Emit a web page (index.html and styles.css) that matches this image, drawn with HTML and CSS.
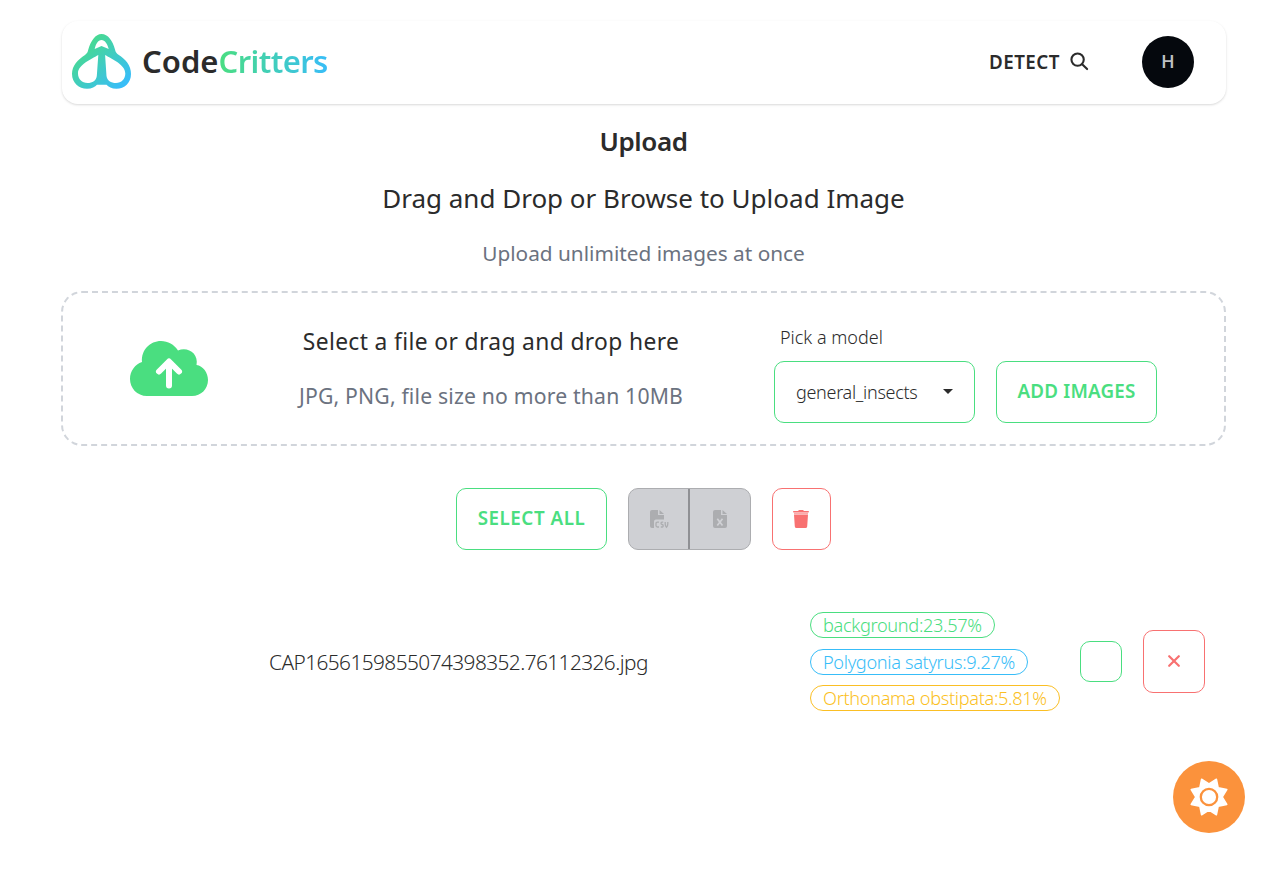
FILE: index.html
```html
<!DOCTYPE html>
<html lang="en">
<head>
<meta charset="utf-8">
<title>CodeCritters</title>
<link rel="stylesheet" href="styles.css">
</head>
<body>
<div class="page">
  <header class="navbar">
    <a class="brand">
      <svg class="brand-mark" viewBox="72 33 60 57">
        <defs><linearGradient id="g" x1="0" y1="0" x2="1" y2="1"><stop offset=".1" stop-color="#4ade80"/><stop offset=".9" stop-color="#38bdf8"/></linearGradient></defs>
        <path fill="url(#g)" fill-rule="evenodd" d="M101.500 34C108 34 112.500 40.500 115 49.500C115.500 52 116.500 53.500 118.500 54.700C125.500 59 131 65.500 131 74C131 83 124.500 88.700 116.500 88.700C111.500 88.700 108.500 87 106.500 84.700H97C95 87 92 88.700 87 88.700C79 88.700 72 83 72 74C72 65.500 78 59.500 85 55C87 53.500 87.800 52 88.300 49.500C91 40.500 95.500 34 101.500 34ZM101.500 40C98 40 95.800 44 94.700 49L101.500 46L108.700 49C107.500 44 105 40 101.500 40ZM98.300 55C91 59.500 78 64.500 78 73.500C78 79 82 83 87.500 83C92.500 83 96.300 80.500 96.800 76ZM105.100 55L106.500 76C107 80.500 111 83 116 83C121.500 83 125.300 79 125.300 73.500C125.300 64.500 112.500 59.500 105.100 55Z"/>
      </svg>
      <span class="brand-name">Code<span class="brand-accent">Critters</span></span>
    </a>
    <nav class="nav-actions">
      <a class="detect"><span>DETECT</span>
        <svg class="search" viewBox="0 0 20 20"><circle cx="8" cy="8" r="6.500"/><path d="M12.800 12.800L18 18"/></svg>
      </a>
      <div class="avatar">H</div>
    </nav>
  </header>
  <main class="main">
    <h1 class="title">Upload</h1>
    <p class="lead">Drag and Drop or Browse to Upload Image</p>
    <p class="sub">Upload unlimited images at once</p>
    <section class="dropzone">
      <svg class="cloud" viewBox="0 0 78 55"><path fill="#4ade80" d="M17 55C7 55 0 47 0 38C0 30 5 23.500 12 21C11 9 20 0 31 0C38 0 44 3.500 48 9.500C57 5 69 12 66.500 24C73 25 78 31.500 78 39C78 48 71 55 62 55Z"/><path class="cloud-arrow" d="M39 44.500V21M29 30.500L39 20.500L49 30.500"/></svg>
      <div class="drop-text">
        <p class="drop-title">Select a file or drag and drop here</p>
        <p class="drop-hint">JPG, PNG, file size no more than 10MB</p>
      </div>
      <div class="controls">
        <div class="model">
          <label class="model-label">Pick a model</label>
          <div class="select"><span>general_insects</span><svg class="caret" viewBox="0 0 10 5"><path fill="#2b2b2b" d="M0 0H10L5 5Z"/></svg></div>
        </div>
        <button class="btn add">ADD IMAGES</button>
      </div>
    </section>
    <div class="toolbar">
      <button class="btn all">SELECT ALL</button>
      <div class="exports">
        <button class="export export-csv"><svg class="csv" viewBox="0 0 19 19"><path fill="#acadb0" d="M2 0H8V5H14V9.500H6C4.500 9.500 4 10.500 4 12V18H2Q0 18 0 16V2Q0 0 2 0ZM9.500 0L14 4H9.500Z"/><path class="csv-letters" d="M9 12.200H7.500Q6 12.200 6 13.700V15.500Q6 17 7.500 17H9M13.200 12.200H12Q11 12.200 11 13.200T12.200 14.500T13.200 16T12.200 17H10.800M15.200 12V14Q15.200 16 16.500 17.300Q17.800 16 17.800 14V12"/></svg></button>
        <button class="export export-xls"><svg class="xls" viewBox="0 0 14 18"><path fill="#acadb0" d="M2 0H8V5H14V16Q14 18 12 18H2Q0 18 0 16V2Q0 0 2 0ZM9.500 0L14 4H9.500Z"/><path class="xls-x" d="M4.300 8.700L9.500 15.500M9.500 8.700L4.300 15.500"/></svg></button>
      </div>
      <button class="trash"><svg class="trash-icon" viewBox="0 0 16 18"><path fill="#f87171" d="M.8 1H5L6 0H10L11 1H15.200Q16 1 16 1.800T15.200 2.600H.8Q0 2.600 0 1.800T.8 1ZM1 4.800H15L14.200 16.500Q14 18 12.500 18H3.500Q2 18 1.800 16.500Z"/><path fill="#fbaaaa" d="M1 2.600H15V4.800H1Z"/></svg></button>
    </div>
    <section class="result">
      <div class="filename">CAP1656159855074398352.76112326.jpg</div>
      <div class="badges">
        <div class="badge green">background:23.57%</div>
        <div class="badge blue">Polygonia satyrus:9.27%</div>
        <div class="badge amber">Orthonama obstipata:5.81%</div>
      </div>
      <div class="check"></div>
      <button class="remove"><svg class="x" viewBox="0 0 12 12"><path d="M1.200 1.200L10.800 10.800M10.800 1.200L1.200 10.800"/></svg></button>
    </section>
  </main>
  <button class="fab"><svg class="sun" viewBox="-19 -19 38 38"><path class="rays" d="M7.400 -17.800L9.200 -9.200L17.800 -7.400L13.200 0L17.800 7.400L9.200 9.200L7.400 17.800L0 13.200L-7.400 17.800L-9.200 9.200L-17.800 7.400L-13.200 0L-17.800 -7.400L-9.200 -9.200L-7.400 -17.800L0 -13.200Z"/><circle r="8.200"/></svg></button>
</div>
</body>
</html>
```
FILE: styles.css
```css
* { box-sizing: border-box; }
body { margin: 0; background: #fff; color: #2b2b2b; font-family: "Noto Sans", sans-serif; }
p, h1 { margin: 0; }
button { background: none; font: inherit; padding: 0; display: flex; align-items: center; justify-content: center; }
svg { display: block; flex: none; }
.page { position: relative; height: 875px; padding: 21px 61px 0; overflow: hidden; }
.navbar { height: 83px; margin: 0 0 0 1px; border-radius: 16px; box-shadow: 0 1px 3px rgba(0,0,0,.1), 0 1px 2px rgba(0,0,0,.06); display: flex; align-items: center; justify-content: space-between; padding: 0 32px 2px 10px; }
.brand { display: flex; align-items: center; gap: 10px; }
.brand-mark { width: 60px; height: 57px; }
.brand-name { font-size: 31px; font-weight: 600; line-height: 38px; padding-bottom: 2px; white-space: nowrap; }
.brand-accent { letter-spacing: -.6px; background: linear-gradient(90deg, #4ade80, #38bdf8); -webkit-background-clip: text; color: transparent; }
.nav-actions { display: flex; align-items: center; gap: 53px; }
.detect { display: flex; align-items: center; gap: 10px; font-size: 18.800px; font-weight: 600; letter-spacing: .5px; }
.search { width: 19px; height: 19px; fill: none; stroke: #2b2b2b; stroke-width: 2.200; stroke-linecap: round; }
.avatar { width: 52px; height: 52px; border-radius: 50%; background: #05080d; color: #bfc0c2; font: 500 18px/52px Roboto, sans-serif; text-align: center; }
.title { margin-top: 17px; font-size: 26px; line-height: 40px; font-weight: 600; letter-spacing: -.4px; text-align: center; }
.lead { margin-top: 17px; font-size: 26px; line-height: 40px; text-align: center; }
.sub { margin-top: 19px; font-size: 20.800px; line-height: 32px; text-align: center; color: #6b7280; }
.dropzone { margin-top: 22px; height: 155px; border: 2px dashed #d1d5db; border-radius: 21px; display: grid; grid-template-columns: 212px 432px 1fr; align-items: center; }
.cloud { width: 78px; height: 55px; justify-self: center; margin-bottom: 1px; }
.cloud-arrow { fill: none; stroke: #fff; stroke-width: 6; stroke-linecap: round; stroke-linejoin: round; }
.drop-text { text-align: center; }
.drop-title { font-size: 22.800px; line-height: 32px; letter-spacing: .37px; }
.drop-hint { margin-top: 22px; font-size: 21.200px; line-height: 32px; color: #6b7280; letter-spacing: .17px; }
.controls { display: flex; align-items: flex-end; gap: 21px; padding: 8px 0 0 67px; }
.model-label { display: block; padding-left: 6px; font-size: 18px; line-height: 28px; margin-bottom: 10px; font-weight: 300; }
.select { width: 201px; height: 62px; border: 1px solid #4ade80; border-radius: 10px; display: flex; align-items: center; justify-content: space-between; padding: 0 21px; font-size: 18px; font-weight: 300; letter-spacing: -.3px; }
.caret { width: 10px; height: 5px; }
.btn { height: 62px; border: 1px solid #4ade80; border-radius: 10px; color: #4ade80; font-size: 18.800px; font-weight: 600; white-space: nowrap; padding-bottom: 1px; }
.add { width: 161px; letter-spacing: .2px; }
.toolbar { margin-top: 42px; display: flex; justify-content: center; gap: 21px; }
.all { width: 151px; letter-spacing: .55px; padding-bottom: 2px; }
.exports { display: flex; width: 123px; height: 62px; border: 1px solid #acadb0; border-radius: 10px; background: #cfd0d4; }
.export { border: 0; }
.export-csv { width: 59px; padding-left: 1px; }
.export-xls { width: 62px; border-left: 2px solid #8f9094; padding-right: 1px; }
.csv { width: 19px; height: 19px; }
.xls { width: 14px; height: 18px; }
.csv-letters { fill: none; stroke: #acadb0; stroke-width: 1.3; }
.xls-x { stroke: #d0d1d5; stroke-width: 1.7; }
.trash { width: 59px; height: 62px; border: 1px solid #f87171; border-radius: 10px; padding-right: 1px; }
.trash-icon { width: 16px; height: 18px; }
.result { margin-top: 62px; display: flex; align-items: center; justify-content: flex-end; padding-right: 21px; }
.filename { width: 541px; margin-right: auto; padding-left: 208px; font-size: 20.800px; white-space: nowrap; font-weight: 300; letter-spacing: -.56px; }
.badges { display: flex; flex-direction: column; align-items: flex-start; gap: 10.500px; width: 250px; margin-right: 20px; }
.badge { height: 26px; line-height: 25px; border: 1px solid; border-radius: 13px; padding: 0 12px; font-size: 18.200px; font-weight: 300; letter-spacing: -.34px; white-space: nowrap; }
.green { color: #4ade80; }
.blue { color: #38bdf8; }
.amber { color: #fbbf24; }
.check { width: 42px; height: 41px; border: 1px solid #4ade80; border-radius: 10px; margin-right: 21px; }
.remove { width: 62px; height: 63px; border: 1px solid #f87171; border-radius: 10px; padding-bottom: 1px; }
.x { width: 12px; height: 12px; stroke: #f87171; stroke-width: 2.200; stroke-linecap: round; }
.fab { position: absolute; right: 42px; bottom: 42px; width: 72px; height: 72px; border: 0; border-radius: 50%; background: #fb923c; }
.sun { width: 38px; height: 38px; }
.rays { fill: #fff; stroke: #fff; stroke-width: 1.500; stroke-linejoin: round; }
.sun circle { fill: #fff; stroke: #fb923c; stroke-width: 2.300; }
```
